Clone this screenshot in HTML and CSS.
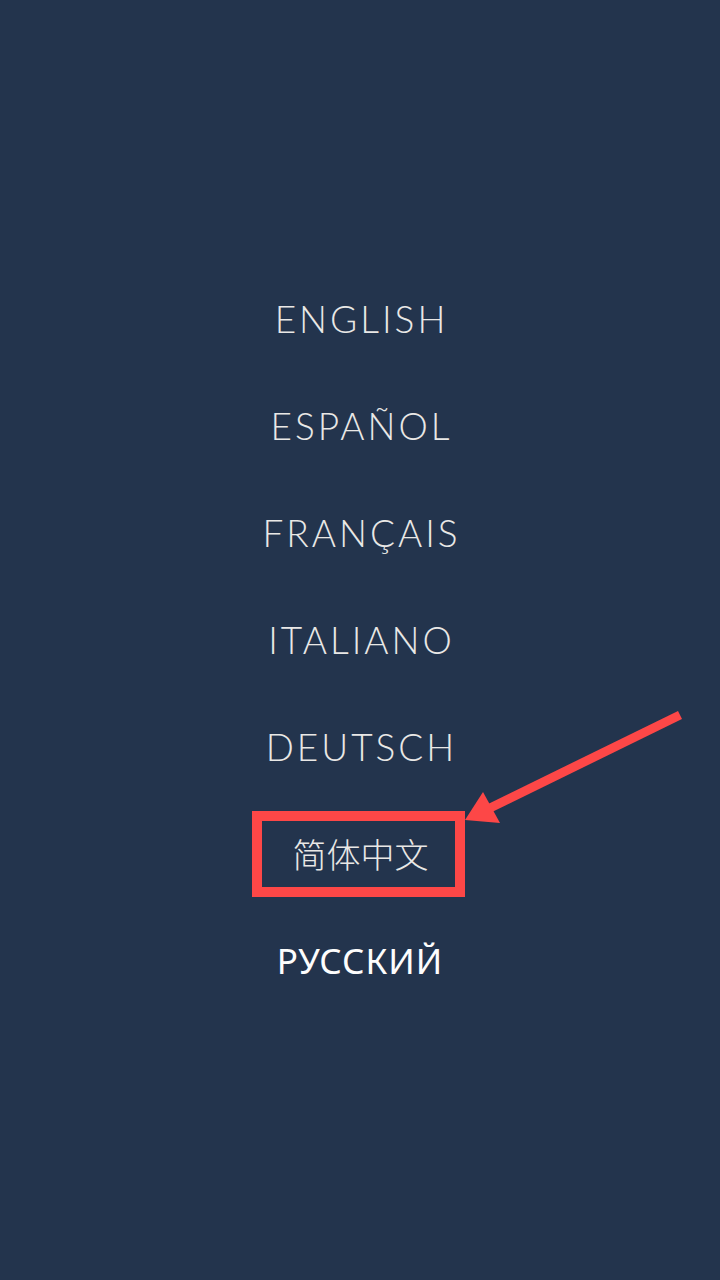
FILE: index.html
```html
<!DOCTYPE html>
<html>
<head lang="en">
    <meta charset="UTF-8">
    <title>Language</title>
    <link rel="stylesheet" href="styles.css">
</head>
<body>
<div id="page">
    <ul id="lang">
        <li>ENGLISH</li>
        <li>ESPAÑOL</li>
        <li>FRANÇAIS</li>
        <li>ITALIANO</li>
        <li>DEUTSCH</li>
        <li class="cn"><span class="mark">简体中文</span></li>
        <li class="ru">РУССКИЙ</li>
    </ul>
    <svg id="arrow" width="720" height="1280" viewBox="0 0 720 1280">
        <line x1="680" y1="715" x2="488" y2="809" stroke="#fd4747" stroke-width="9"/>
        <polygon points="465,820 483,792 500,823" fill="#fd4747"/>
    </svg>
</div>
</body>
</html>
```

FILE: styles.css
```css
*{
    margin: 0;
    padding: 0;
}
ul{
    list-style: none;
}
body{
    background: #23344d;
}
#page{
    width: 720px;
    height: 1280px;
    position: relative;
    overflow: hidden;
}
#lang{
    padding-top: 265px;
    display: flex;
    flex-direction: column;
    align-items: center;
}
#lang li{
    height: 107px;
    display: flex;
    align-items: center;
    justify-content: center;
    font-family: "Lato", "Noto Sans", sans-serif;
    font-weight: 300;
    font-size: 37px;
    letter-spacing: 3px;
    padding-left: 3px;
    color: #e9e8e6;
}
#lang li.cn{
    font-family: "Noto Sans CJK SC", sans-serif;
    font-weight: 300;
    font-size: 34px;
    letter-spacing: 0;
    padding-left: 0;
}
.mark{
    border: 10px solid #fd4747;
    width: 188px;
    height: 66px;
    padding-left: 5px;
    line-height: 66px;
    text-align: center;
    margin-left: -4px;
}
#lang li.ru{
    font-family: "Noto Sans", sans-serif;
    font-weight: 400;
    font-size: 35px;
    letter-spacing: 1px;
    padding-left: 0;
    color: #fdfdfd;
}
#arrow{
    position: absolute;
    left: 0;
    top: 0;
}
```
